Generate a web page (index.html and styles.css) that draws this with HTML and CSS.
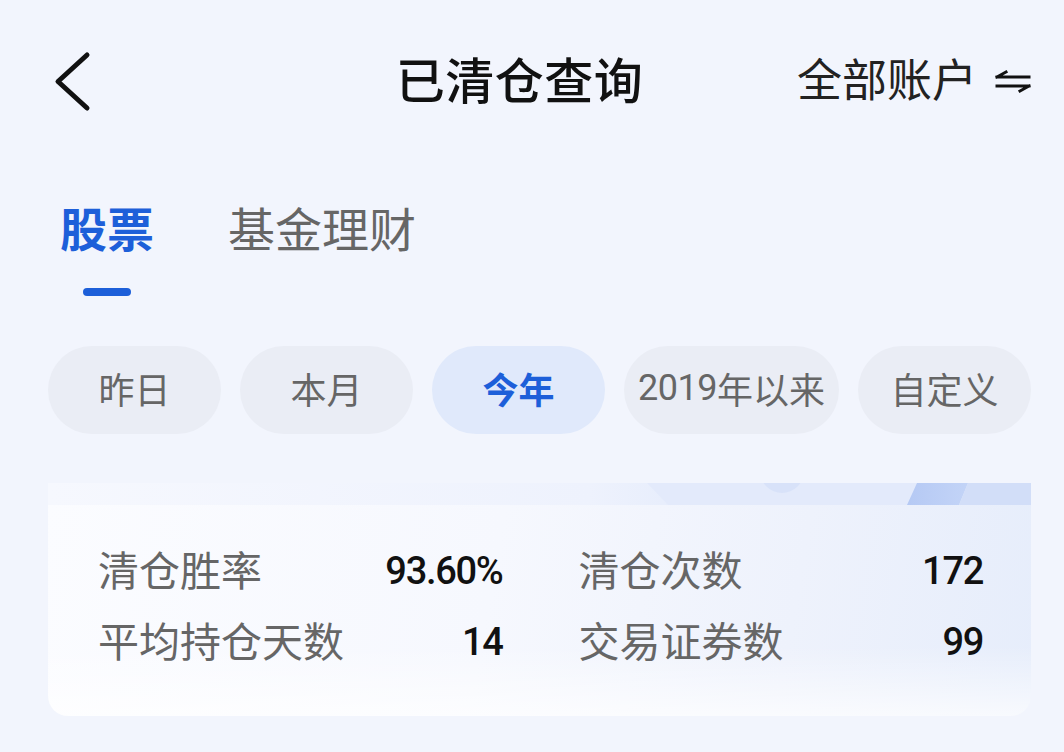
FILE: index.html
```html
<!DOCTYPE html>
<html lang="zh-CN">
<head>
<meta charset="utf-8">
<title>已清仓查询</title>
<link rel="stylesheet" href="styles.css">
</head>
<body>
<div class="page">
  <header class="nav">
    <div class="nav-left">
      <svg class="back" width="44" height="64" viewBox="0 0 44 64">
        <polyline points="39,5 10,31.5 39,58" fill="none" stroke="#111" stroke-width="5" stroke-linecap="round" stroke-linejoin="round"/>
      </svg>
    </div>
    <h1 class="title">已清仓查询</h1>
    <div class="nav-right">
      <span class="account">全部账户</span>
      <svg class="swap" width="36" height="26" viewBox="0 0 36 26">
        <path d="M2 8 H34 M2 8 L11 3" fill="none" stroke="#111" stroke-width="3" stroke-linecap="square"/>
        <path d="M2 17 H34 M34 17 L25 22" fill="none" stroke="#111" stroke-width="3" stroke-linecap="square"/>
      </svg>
    </div>
  </header>

  <nav class="tabs">
    <div class="tab active">
      <span class="tab-text">股票</span>
      <span class="tab-bar"></span>
    </div>
    <div class="tab">
      <span class="tab-text">基金理财</span>
    </div>
  </nav>

  <div class="chips">
    <span class="chip">昨日</span>
    <span class="chip">本月</span>
    <span class="chip chip-active">今年</span>
    <span class="chip chip-wide"><span class="num">2019</span>年以来</span>
    <span class="chip">自定义</span>
  </div>

  <section class="card">
    <svg class="card-band" width="983" height="22" viewBox="0 0 983 22" preserveAspectRatio="none">
      <defs>
        <linearGradient id="bandBase" x1="0" y1="0" x2="1" y2="0">
          <stop offset="0" stop-color="#f6f8fe"/>
          <stop offset="0.55" stop-color="#eef2fd"/>
          <stop offset="0.7" stop-color="#e2eafb"/>
          <stop offset="1" stop-color="#d6e1f9"/>
        </linearGradient>
        <linearGradient id="bandDark" x1="0" y1="0" x2="1" y2="0">
          <stop offset="0" stop-color="#b5c9f4"/>
          <stop offset="1" stop-color="#c3d4f7"/>
        </linearGradient>
      </defs>
      <rect x="0" y="0" width="983" height="22" fill="url(#bandBase)"/>
      <polygon points="599,0 983,0 983,22 620,22" fill="#e3eafb"/>
      <circle cx="734" cy="-12" r="22" fill="#d8e2f9"/>
      <polygon points="869,0 920,0 911,22 859,22" fill="url(#bandDark)"/>
      <polygon points="920,0 983,0 983,22 911,22" fill="#d2def8"/>
    </svg>
    <div class="stats">
      <div class="stat"><span class="label">清仓胜率</span><span class="value">93.60%</span></div>
      <div class="stat"><span class="label">清仓次数</span><span class="value">172</span></div>
      <div class="stat"><span class="label">平均持仓天数</span><span class="value">14</span></div>
      <div class="stat"><span class="label">交易证券数</span><span class="value">99</span></div>
    </div>
  </section>
</div>
</body>
</html>
```

FILE: styles.css
```css
* {
  box-sizing: border-box;
}

html, body {
  margin: 0;
  padding: 0;
}

body {
  background: #f2f5fd;
  font-family: "Noto Sans CJK SC", "Noto Sans", sans-serif;
  color: #111;
  width: 1064px;
  height: 752px;
  overflow: hidden;
}

.page {
  display: flex;
  flex-direction: column;
}

/* ---------- nav bar ---------- */
.nav {
  height: 164px;
  display: grid;
  grid-template-columns: 1fr auto 1fr;
  align-items: center;
  padding: 0 33px 0 48px;
}

.nav-left {
  display: flex;
  align-items: center;
}

.back {
  display: block;
}

.title {
  margin: 0;
  padding: 0 40px 10px 0;
  font-size: 49px;
  font-weight: 500;
  line-height: 1;
  letter-spacing: 0.5px;
  color: #111;
}

.nav-right {
  display: flex;
  align-items: center;
  justify-content: flex-end;
  gap: 18px;
}

.account {
  font-size: 45px;
  line-height: 1;
  padding-bottom: 10px;
  color: #222;
}

.swap {
  display: block;
}

/* ---------- tabs ---------- */
.tabs {
  display: flex;
  gap: 74px;
  padding: 33px 0 0 60px;
}

.tab {
  display: flex;
  flex-direction: column;
  align-items: center;
}

.tab-text {
  font-size: 47px;
  line-height: 60px;
  color: #666;
}

.tab.active .tab-text {
  color: #1d5fd9;
  font-weight: 700;
}

.tab-bar {
  margin-top: 31px;
  width: 48px;
  height: 8px;
  border-radius: 4px;
  background: #1d5fd9;
}

.tab:not(.active) {
  padding-bottom: 39px;
}

/* ---------- chips ---------- */
.chips {
  display: flex;
  gap: 19px;
  padding: 50px 33px 0 48px;
}

.chip {
  min-width: 173px;
  height: 88px;
  padding: 0 13px 5px;
  border-radius: 44px;
  background: #eaedf5;
  display: flex;
  align-items: center;
  justify-content: center;
  font-size: 36px;
  color: #666;
  white-space: nowrap;
}

.chip-wide {
  padding: 0 14.5px 5px;
}

.chip .num {
  font-family: Roboto, "Noto Sans", sans-serif;
  letter-spacing: -0.5px;
}

.chip-active {
  background: #e0e9fb;
  color: #1d5fd9;
  font-weight: 700;
}

/* ---------- card ---------- */
.card {
  margin: 49px 33px 0 48px;
  height: 233px;
  border-radius: 0 0 20px 20px;
  overflow: hidden;
  background:
    linear-gradient(180deg, rgba(255,255,255,0) 70%, rgba(255,255,255,0.7) 100%),
    linear-gradient(100deg, #fbfcff 0%, #f6f8fe 45%, #eef2fc 75%, #e6edfb 100%);
  display: flex;
  flex-direction: column;
}

.card-band {
  display: block;
  width: 100%;
  height: 22px;
  flex: none;
}

.stats {
  display: grid;
  grid-template-columns: 1fr 1fr;
  grid-auto-rows: 71px;
  column-gap: 76px;
  padding: 30px 48px 0 50px;
}

.stat {
  display: flex;
  align-items: center;
  justify-content: space-between;
}

.label {
  font-size: 41px;
  line-height: 1;
  padding-bottom: 4px;
  color: #666;
}

.value {
  font-family: Roboto, "Noto Sans", sans-serif;
  font-size: 38px;
  font-weight: 500;
  letter-spacing: -1.3px;
  line-height: 1;
  color: #111;
}
```
